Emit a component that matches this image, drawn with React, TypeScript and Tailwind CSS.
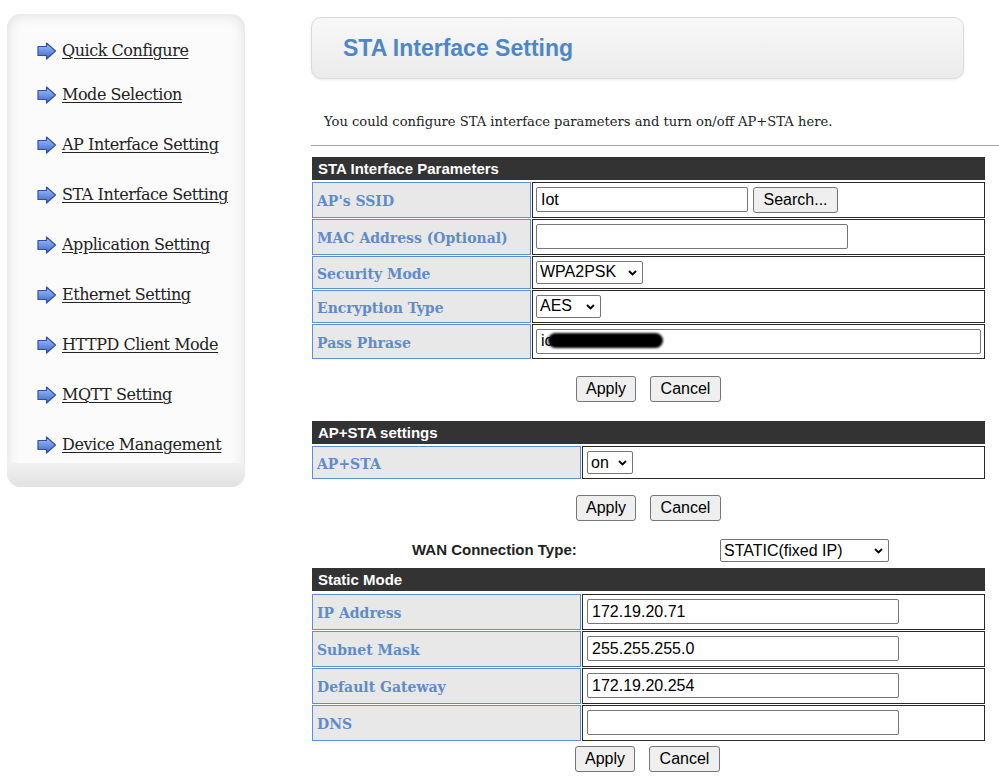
import React from "react";

const serif = "font-['DejaVu_Serif',Georgia,serif]";
const sans = "font-['Liberation_Sans',Arial,sans-serif]";

const menu = [
  "Quick Configure",
  "Mode Selection",
  "AP Interface Setting",
  "STA Interface Setting",
  "Application Setting",
  "Ethernet Setting",
  "HTTPD Client Mode",
  "MQTT Setting",
  "Device Management",
];

function ArrowIcon() {
  return (
    <svg width="20" height="18" viewBox="0 0 20 18" className="shrink-0">
      <defs>
        <linearGradient id="arrowFill" x1="0" y1="0" x2="0" y2="1">
          <stop offset="0" stopColor="#a9c2f4" />
          <stop offset="0.5" stopColor="#6f95e4" />
          <stop offset="1" stopColor="#3f64c4" />
        </linearGradient>
      </defs>
      <path
        d="M1 4.5 H9.5 V1 L18.5 9 L9.5 17 V13.5 H1 Z"
        fill="url(#arrowFill)"
        stroke="#2f4fa8"
        strokeWidth="1.2"
        strokeLinejoin="round"
      />
    </svg>
  );
}

function Sidebar() {
  return (
    <div className="pl-[7px] pt-[14px] shrink-0">
      <div className="w-[238px] rounded-[14px] bg-[#fbfbfb] shadow-[inset_0_0_14px_rgba(0,0,0,0.13)] overflow-hidden">
        <div className="flex flex-col pl-[30px] pt-[25px] pb-[6px]">
          {menu.map((m, i) => (
            <div
              key={m}
              className={`flex items-center h-[24px] ${i === 0 ? "" : i === 1 ? "mt-[20px]" : "mt-[26px]"}`}
            >
              <ArrowIcon />
              <a
                href="#"
                className={`${serif} ml-[5px] text-[16px] tracking-[-0.45px] text-[#222] underline underline-offset-[2px] decoration-[1px] whitespace-nowrap`}
              >
                {m}
              </a>
            </div>
          ))}
        </div>
        <div className="h-[24px] bg-gradient-to-b from-[#f1f1f1] to-[#e2e2e2]" />
      </div>
    </div>
  );
}

function TextInput({ value, w }: { value: string; w: string }) {
  return (
    <input
      readOnly
      value={value}
      className={`${sans} ${w} h-[25px] border border-[#767676] rounded-[2px] bg-white px-[4px] text-[16px] text-black outline-none`}
    />
  );
}

function Select({ value, w }: { value: string; w: string }) {
  return (
    <span className={`relative inline-flex ${w}`}>
      <select
        defaultValue={value}
        className={`${sans} appearance-none w-full h-[23px] border border-[#767676] rounded-[2px] bg-white pl-[3px] pr-[16px] text-[16px] leading-[20px] text-black outline-none`}
      >
        <option>{value}</option>
      </select>
      <svg
        width="9"
        height="6"
        viewBox="0 0 9 6"
        className="absolute right-[6px] top-[9px] pointer-events-none"
      >
        <path d="M1 1 L4.5 4.5 L8 1" fill="none" stroke="#000" strokeWidth="1.8" />
      </svg>
    </span>
  );
}

function Btn({ label, w }: { label: string; w: string }) {
  return (
    <button
      className={`${sans} ${w} h-[26px] border border-[#767676] rounded-[3px] bg-[#efefef] text-[16px] text-black`}
    >
      {label}
    </button>
  );
}

function BarHeader({ title }: { title: string }) {
  return (
    <div
      className={`${sans} h-[23px] w-[673px] bg-[#333333] text-white font-bold text-[15px] leading-[23px] pl-[6px]`}
    >
      {title}
    </div>
  );
}

function Row({
  label,
  lw,
  h,
  children,
}: {
  label: string;
  lw: string;
  h: string;
  children: React.ReactNode;
}) {
  return (
    <div className={`flex gap-[1px] ${h}`}>
      <div
        className={`${lw} ${serif} shrink-0 flex items-center border border-[#5b8fd6] bg-[#e8e8e8] pl-[4px] pt-[4px] text-[14px] font-bold text-[#5f8cc9]`}
      >
        {label}
      </div>
      <div className="flex-1 flex items-center border border-[#2a2a2a] pl-[3px] gap-[5px] relative">
        {children}
      </div>
    </div>
  );
}

function Buttons({ className }: { className: string }) {
  return (
    <div className={`w-[673px] flex justify-center gap-[14px] ${className}`}>
      <Btn label="Apply" w="w-[60px]" />
      <Btn label="Cancel" w="w-[71px]" />
    </div>
  );
}

export default function App() {
  return (
    <div className="w-[999px] h-[782px] bg-white flex overflow-hidden">
      <Sidebar />
      <main className="ml-[66px] flex-1 flex flex-col">
        <div className="mt-[17px] w-[653px] h-[62px] rounded-[10px] border border-[#dadada] bg-gradient-to-b from-[#f8f8f8] to-[#ebebeb] shadow-[0_1px_2px_rgba(0,0,0,0.08)] flex items-center pl-[31px]">
          <h1 className={`${sans} text-[23px] font-bold text-[#4d87c7]`}>STA Interface Setting</h1>
        </div>

        <p className={`${serif} mt-[33px] pl-[13px] text-[13.1px] text-[#222]`}>
          You could configure STA interface parameters and turn on/off AP+STA here.
        </p>
        <div className="mt-[13px] h-[1px] bg-[#a8a8a8]" />

        <div className="ml-[1px] mt-[11px] flex flex-col">
          <BarHeader title="STA Interface Parameters" />
          <div className="w-[673px] flex flex-col gap-[1px] mt-[2px]">
            <Row label="AP's SSID" lw="w-[219px]" h="h-[36px]">
              <TextInput value="Iot" w="w-[212px]" />
              <Btn label="Search..." w="w-[85px]" />
            </Row>
            <Row label="MAC Address (Optional)" lw="w-[219px]" h="h-[36px]">
              <TextInput value="" w="w-[312px]" />
            </Row>
            <Row label="Security Mode" lw="w-[219px]" h="h-[33px]">
              <Select value="WPA2PSK" w="w-[107px]" />
            </Row>
            <Row label="Encryption Type" lw="w-[219px]" h="h-[33px]">
              <Select value="AES" w="w-[65px]" />
            </Row>
            <Row label="Pass Phrase" lw="w-[219px]" h="h-[35px]">
              <div className="relative">
                <TextInput value="ic" w="w-[445px]" />
                <div className="absolute left-[12px] top-[5px] w-[115px] h-[15px] rounded-full bg-black blur-[1px]" />
              </div>
            </Row>
          </div>

          <Buttons className="mt-[17px]" />

          <div className="mt-[19px]">
            <BarHeader title="AP+STA settings" />
          </div>
          <div className="w-[673px] mt-[2px]">
            <Row label="AP+STA" lw="w-[269px]" h="h-[33px]">
              <span className="ml-[1px]">
                <Select value="on" w="w-[46px]" />
              </span>
            </Row>
          </div>

          <Buttons className="mt-[16px]" />

          <div className="w-[673px] h-[22px] mt-[19px] flex items-center">
            <span className={`${sans} ml-[100px] w-[308px] text-[15px] font-bold text-[#222]`}>
              WAN Connection Type:
            </span>
            <Select value="STATIC(fixed IP)" w="w-[169px]" />
          </div>

          <div className="mt-[6px]">
            <BarHeader title="Static Mode" />
          </div>
          <div className="w-[673px] flex flex-col gap-[1px] mt-[3px]">
            {[
              ["IP Address", "172.19.20.71"],
              ["Subnet Mask", "255.255.255.0"],
              ["Default Gateway", "172.19.20.254"],
              ["DNS", ""],
            ].map(([l, v]) => (
              <Row key={l} label={l} lw="w-[269px]" h="h-[36px]">
                <span className="ml-[1px]">
                  <TextInput value={v} w="w-[312px]" />
                </span>
              </Row>
            ))}
          </div>

          <div className="w-[673px] flex justify-center gap-[14px] mt-[5px] pr-[2px]">
            <Btn label="Apply" w="w-[60px]" />
            <Btn label="Cancel" w="w-[71px]" />
          </div>
        </div>
      </main>
    </div>
  );
}
